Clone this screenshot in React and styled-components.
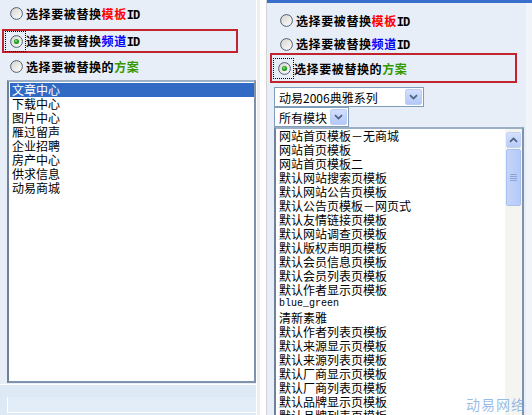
import React from "react";
import styled, { createGlobalStyle } from "styled-components";

const GlobalStyle = createGlobalStyle`
  html, body {
    margin: 0;
    padding: 0;
    background: #fff;
  }
  body {
    width: 532px;
    height: 415px;
    overflow: hidden;
    font-family: "Noto Sans CJK SC", "Liberation Sans", sans-serif;
    font-size: 12px;
    color: #000;
  }
`;

const channels = ["文章中心", "下载中心", "图片中心", "雁过留声", "企业招聘", "房产中心", "供求信息", "动易商城"];

const templates = [
    "网站首页模板－无商城",
    "网站首页模板",
    "网站首页模板二",
    "默认网站搜索页模板",
    "默认网站公告页模板",
    "默认公告页模板－网页式",
    "默认友情链接页模板",
    "默认网站调查页模板",
    "默认版权声明页模板",
    "默认会员信息页模板",
    "默认会员列表页模板",
    "默认作者显示页模板",
    "blue_green",
    "清新素雅",
    "默认作者列表页模板",
    "默认来源显示页模板",
    "默认来源列表页模板",
    "默认厂商显示页模板",
    "默认厂商列表页模板",
    "默认品牌显示页模板",
    "默认品牌列表页模板",
];

function Radio({ checked, id }) {
    return (
        <svg width="13" height="13" viewBox="0 0 13 13">
            <defs>
                <linearGradient id={id} x1="0" y1="0" x2="1" y2="1">
                    <stop offset="0" stopColor="#D4D3CB" />
                    <stop offset="1" stopColor="#FFFFFF" />
                </linearGradient>
            </defs>
            <circle cx="6.5" cy="6.5" r="5.9" fill={`url(#${id})`} stroke="#4E5F75" strokeWidth="1" />
            {checked && <circle cx="6.5" cy="6.5" r="2.6" fill="#2EA02E" />}
            {checked && <circle cx="6" cy="6" r="1" fill="#8ADB7E" />}
        </svg>
    );
}

function Chevron({ dir = "down" }) {
    return (
        <svg width="9" height="6" viewBox="0 0 9 6">
            <path
                d={dir === "down" ? "M1 1.2 L4.5 4.6 L8 1.2" : "M1 4.8 L4.5 1.4 L8 4.8"}
                fill="none"
                stroke="#4D6185"
                strokeWidth="1.8"
            />
        </svg>
    );
}

function Option({ checked, id, children }) {
    return (
        <>
            <RadioWrap $focused={checked}>
                <Radio checked={checked} id={id} />
            </RadioWrap>
            <Label>{children}</Label>
        </>
    );
}

export default function App() {
    return (
        <Screen>
            <GlobalStyle />
            <LeftPane>
                <OptionRow $h={27}>
                    <Option id="l1">
                        选择要被替换<Red>模板</Red><Latin>ID</Latin>
                    </Option>
                </OptionRow>
                <OptionBox $w={236} $h={24} $mt={2} $ml={2}>
                    <Option id="l2" checked>
                        选择要被替换<Blue>频道</Blue><Latin>ID</Latin>
                    </Option>
                </OptionBox>
                <OptionRow $h={26}>
                    <Option id="l3">
                        选择要被替换的<Green>方案</Green>
                    </Option>
                </OptionRow>
                <ListBox $w={249} $h={303} $ml={7} $mt={1}>
                    <Items $pt={1}>
                        {channels.map((c, i) => (
                            <Item key={c} $selected={i === 0}>
                                {c}
                            </Item>
                        ))}
                    </Items>
                </ListBox>
                <Footer>
                    <FooterFrame />
                </Footer>
            </LeftPane>
            <Gutter />
            <RightPane>
                <TitleBar />
                <OptionRow $h={25} $mt={5} $pl={8}>
                    <Option id="r1">
                        选择要被替换<Red>模板</Red><Latin>ID</Latin>
                    </Option>
                </OptionRow>
                <OptionRow $h={20} $pl={8} $pt={2}>
                    <Option id="r2">
                        选择要被替换<Blue>频道</Blue><Latin>ID</Latin>
                    </Option>
                </OptionRow>
                <OptionBox $w={247} $h={30} $ml={3}>
                    <Option id="r3" checked>
                        选择要被替换的<Green>方案</Green>
                    </Option>
                </OptionBox>
                <Combo $w={150} $mt={4}>
                    <ComboText>动易2006典雅系列</ComboText>
                    <ComboButton>
                        <Chevron />
                    </ComboButton>
                </Combo>
                <Combo $w={75} $mt={0}>
                    <ComboText>所有模块</ComboText>
                    <ComboButton>
                        <Chevron />
                    </ComboButton>
                </Combo>
                <ListBox $w={250} $h={300} $ml={7} $mt={0}>
                    <Items $pt={0}>
                        {templates.map((t) => (
                            <Item key={t} $mono={/^[a-z_]+$/.test(t)}>
                                {t}
                            </Item>
                        ))}
                    </Items>
                    <ScrollBar>
                        <ScrollButton>
                            <Chevron dir="up" />
                        </ScrollButton>
                        <Thumb>
                            <Grip />
                            <Grip />
                            <Grip />
                            <Grip />
                        </Thumb>
                    </ScrollBar>
                </ListBox>
            </RightPane>
            <Watermark>动易网络</Watermark>
        </Screen>
    );
}

const Screen = styled.div`
    position: relative;
    display: flex;
    width: 532px;
    height: 415px;
    overflow: hidden;
    background: #fff;
`;

const LeftPane = styled.div`
    flex: none;
    width: 256px;
    display: flex;
    flex-direction: column;
    background: #e7eef7;
    border-right: 1px solid #fff;
`;

const Gutter = styled.div`
    flex: none;
    width: 10px;
    background: linear-gradient(to right, #eeeeee 0 3px, #fff 3px 9px, #d2d2d2 9px);
`;

const RightPane = styled.div`
    flex: none;
    width: 265px;
    display: flex;
    flex-direction: column;
    background: #e7eef7;
    box-shadow: inset -6px 0 0 #f1f4f8;
`;

const TitleBar = styled.div`
    flex: none;
    height: 3px;
    background: #3a70cc;
`;

const OptionRow = styled.div`
    flex: none;
    display: flex;
    align-items: center;
    box-sizing: border-box;
    height: ${({ $h }) => $h}px;
    margin-top: ${({ $mt = 0 }) => $mt}px;
    padding-top: ${({ $pt = 0 }) => $pt}px;
    padding-left: ${({ $pl = 5 }) => $pl}px;
`;

const OptionBox = styled.div`
    flex: none;
    display: flex;
    align-items: center;
    box-sizing: border-box;
    width: ${({ $w }) => $w}px;
    height: ${({ $h }) => $h}px;
    margin-top: ${({ $mt = 0 }) => $mt}px;
    margin-left: ${({ $ml }) => $ml}px;
    padding-left: 1px;
    border: 2px solid #c2242d;
`;

const RadioWrap = styled.span`
    display: flex;
    padding: 3px 2px 3px 4px;
    border: 1px dotted ${({ $focused }) => ($focused ? "#000" : "transparent")};
`;

const Label = styled.span`
    font-weight: bold;
    font-size: 12px;
    letter-spacing: 0.6px;
    white-space: nowrap;
`;

const Red = styled.span`
    color: #ff0000;
`;

const Blue = styled.span`
    color: #0000ff;
`;

const Green = styled.span`
    color: #339900;
`;

const Latin = styled.span`
    font-family: "Liberation Mono", monospace;
    font-size: 12px;
    letter-spacing: -1px;
`;

const ListBox = styled.div`
    flex: none;
    display: flex;
    box-sizing: border-box;
    width: ${({ $w }) => $w}px;
    height: ${({ $h }) => $h}px;
    margin-left: ${({ $ml }) => $ml}px;
    margin-top: ${({ $mt }) => $mt}px;
    background: #fff;
    border: 2px solid #7f93ab;
    border-top-color: #9aaec6;
    border-left-color: #6f8299;
    overflow: hidden;
`;

const Items = styled.div`
    flex: 1;
    padding-top: ${({ $pt }) => $pt}px;
    padding-left: 1px;
`;

const Item = styled.div`
    height: 14px;
    line-height: 14px;
    padding-left: 2px;
    white-space: nowrap;
    font-size: ${({ $mono }) => ($mono ? "10px" : "12px")};
    font-family: ${({ $mono }) =>
        $mono ? `"Liberation Mono", monospace` : `"Noto Sans CJK SC", sans-serif`};
    color: ${({ $selected }) => ($selected ? "#fff" : "#000")};
    background: ${({ $selected }) => ($selected ? "#316ac5" : "transparent")};
`;

const Footer = styled.div`
    flex: 1;
    margin-top: 1px;
    background: #dde9f5;
    border-top: 1px solid #fff;
    display: flex;
`;

const FooterFrame = styled.div`
    flex: 1;
    margin: 12px 0 2px 7px;
    border-left: 1px solid #fff;
    border-bottom: 1px solid #fff;
    background: #e2edf7;
`;

const Combo = styled.div`
    flex: none;
    display: flex;
    align-items: center;
    box-sizing: border-box;
    width: ${({ $w }) => $w}px;
    height: 20px;
    margin-top: ${({ $mt }) => $mt}px;
    margin-left: 7px;
    background: #fff;
    border: 1px solid #7f9db9;
`;

const ComboText = styled.span`
    flex: 1;
    padding-left: 4px;
    font-size: 12px;
    white-space: nowrap;
`;

const ComboButton = styled.span`
    flex: none;
    display: flex;
    align-items: center;
    justify-content: center;
    width: 15px;
    height: 14px;
    margin-right: 1px;
    border: 1px solid #bccdf7;
    border-radius: 2px;
    background: linear-gradient(#d3e0fd, #b3c8f7);
`;

const ScrollBar = styled.div`
    flex: none;
    width: 17px;
    display: flex;
    flex-direction: column;
    padding-top: 3px;
    background: #f4f4f0;
`;

const ScrollButton = styled.div`
    display: flex;
    align-items: center;
    justify-content: center;
    height: 14px;
    margin: 0 1px;
    border: 1px solid #c3d3f8;
    border-radius: 2px;
    background: linear-gradient(#d6e2fd, #b8cbf7);
`;

const Thumb = styled.div`
    display: flex;
    flex-direction: column;
    align-items: center;
    justify-content: center;
    gap: 1px;
    height: 55px;
    margin: 1px 1px 0;
    border: 1px solid #a9c0f3;
    border-radius: 2px;
    background: linear-gradient(to right, #c4d5fb, #b6caf6);
`;

const Grip = styled.span`
    width: 7px;
    height: 1px;
    background: #8ca4d8;
`;

const Watermark = styled.div`
    position: absolute;
    right: 6px;
    bottom: 1px;
    font-family: "Noto Sans CJK SC", sans-serif;
    font-size: 14px;
    letter-spacing: 1px;
    color: rgba(120, 165, 225, 0.75);
`;
